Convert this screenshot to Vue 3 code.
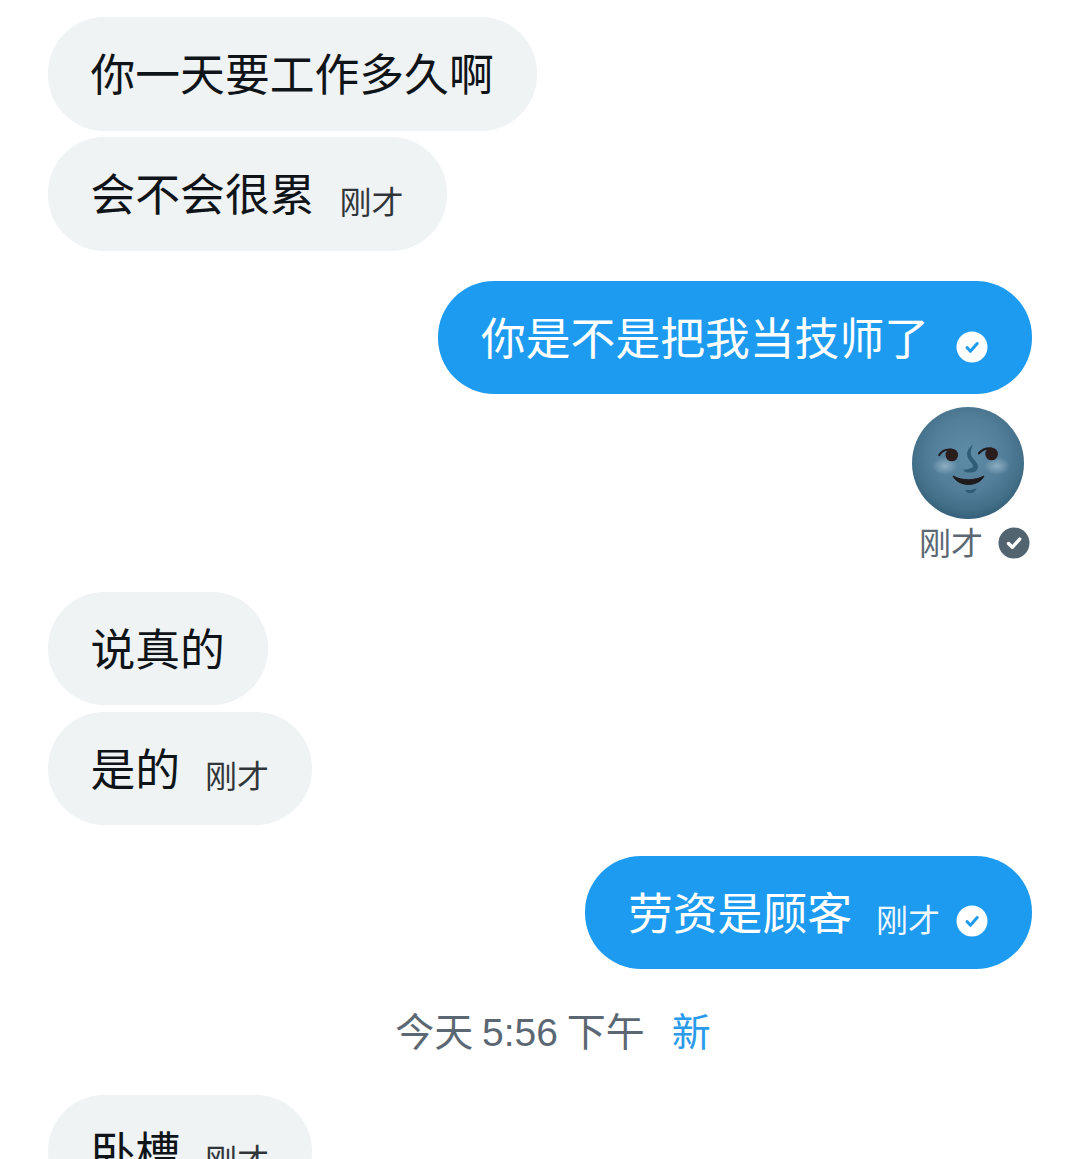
<template>
  <div class="chat">
    <div class="group">
      <div class="bubble in">你一天要工作多久啊</div>
      <div class="bubble in">会不会很累<span class="time">刚才</span></div>
    </div>

    <div class="group out-group first-out">
      <div class="bubble out">
        你是不是把我当技师了
        <svg class="tick tick-solo" viewBox="0 0 32 32">
          <circle cx="16" cy="16" r="15.5" fill="#fff" />
          <path d="M11 16.5l3.4 3.8 6.8-7.8" fill="none" stroke="#1d9bf0" stroke-width="3" stroke-linecap="round" stroke-linejoin="round" />
        </svg>
      </div>
      <svg class="moon" viewBox="0 0 112 112">
        <defs>
          <radialGradient id="moonFill" cx="50%" cy="42%" r="58%">
            <stop offset="0%" stop-color="#5d8ba6" />
            <stop offset="55%" stop-color="#547f9a" />
            <stop offset="85%" stop-color="#436f89" />
            <stop offset="100%" stop-color="#35607a" />
          </radialGradient>
          <radialGradient id="cheek">
            <stop offset="0%" stop-color="#a4c1d1" stop-opacity="0.7" />
            <stop offset="100%" stop-color="#a4c1d1" stop-opacity="0" />
          </radialGradient>
        </defs>
        <circle cx="56" cy="56" r="56" fill="url(#moonFill)" />
        <ellipse cx="33" cy="59" rx="13" ry="9" fill="url(#cheek)" />
        <ellipse cx="85" cy="59" rx="13" ry="9" fill="url(#cheek)" />
        <path d="M27.3 48c2.5-4.2 6.5-6 12-5.4" fill="none" stroke="#1f1a1c" stroke-width="2.2" stroke-linecap="round" />
        <circle cx="39.8" cy="48" r="6.3" fill="#2a1d1c" />
        <path d="M67 46.3c3-3.6 7-5.2 12.5-4.8" fill="none" stroke="#1f1a1c" stroke-width="2.2" stroke-linecap="round" />
        <circle cx="79.6" cy="47" r="6.3" fill="#2a1d1c" />
        <path d="M60.7 37.5c-4 3.4-6.5 7.5-5.3 12 .9 3.4 4.5 6 5.6 9 .5 1.6-1.6 3.6-9.9 4.5 1 1.6 3.8 2.6 6.8 2.6 5 0 8.3-2.5 8-6.2-.3-3.6-4.2-6.4-6.2-9.8-1.6-2.9-.7-7.4 1-12.1z" fill="#2f5d78" />
        <path d="M41 69c9.5 5 21 5 31 0-2 5-9 8.5-15.5 8.5S43 74 41 69z" fill="#1f1a1c" stroke="#1f1a1c" stroke-width="1" stroke-linejoin="round" />
        <path d="M53 83c4 .4 8-.2 11.7-1.8-1 3-3.7 5.1-6.7 5.1-2.2 0-4-1.3-5-3.3z" fill="#2f5d78" />
      </svg>
      <div class="meta">
        <span class="meta-time">刚才</span>
        <svg class="tick" viewBox="0 0 32 32">
          <circle cx="16" cy="16" r="15.5" fill="#536471" />
          <path d="M10.5 16.5l3.8 3.8 7.4-8.2" fill="none" stroke="#fff" stroke-width="3.4" stroke-linecap="round" stroke-linejoin="round" />
        </svg>
      </div>
    </div>

    <div class="group second-in">
      <div class="bubble in">说真的</div>
      <div class="bubble in">是的<span class="time">刚才</span></div>
    </div>

    <div class="group out-group second-out">
      <div class="bubble out">
        劳资是顾客<span class="time">刚才</span>
        <svg class="tick tick-inline" viewBox="0 0 32 32">
          <circle cx="16" cy="16" r="15.5" fill="#fff" />
          <path d="M11 16.5l3.4 3.8 6.8-7.8" fill="none" stroke="#1d9bf0" stroke-width="3" stroke-linecap="round" stroke-linejoin="round" />
        </svg>
      </div>
    </div>

    <div class="divider">今天 5:56 下午<span class="new">新</span></div>

    <div class="group last-in">
      <div class="bubble in">卧槽<span class="time">刚才</span></div>
    </div>
  </div>
</template>

<script setup>
</script>

<style>
html,
body {
  margin: 0;
  background: #fff;
  overflow: hidden;
}
</style>

<style scoped>
.chat {
  height: 1159px;
  overflow: hidden;
  box-sizing: border-box;
  padding: 17px 47px 0 48px;
  font-family: "Liberation Sans", "Noto Sans CJK SC", sans-serif;
}

.group {
  display: flex;
  flex-direction: column;
  align-items: flex-start;
  gap: 6.5px;
}

.out-group {
  align-items: flex-end;
}

.first-out {
  margin-top: 30px;
  gap: 0;
}

.second-in {
  margin-top: 25px;
}

.second-out {
  margin-top: 30.5px;
}

.last-in {
  margin-top: 37px;
}

.bubble {
  display: flex;
  align-items: center;
  height: 113.5px;
  box-sizing: border-box;
  padding: 0 43px 4px 42.5px;
  border-radius: 56px;
  font-size: 44.8px;
  white-space: nowrap;
}

.in {
  background: #eff3f4;
  color: #0f1419;
}

.out {
  background: #1d9bf0;
  color: #fff;
  padding-left: 43px;
  padding-right: 44px;
}

.time {
  font-size: 32px;
  margin-left: 24px;
  position: relative;
  top: 8px;
  opacity: 0.85;
}

.in .time {
  margin-left: 25px;
}

.out .time {
  opacity: 0.92;
}

.tick {
  width: 32px;
  height: 32px;
  flex: none;
}

.tick-solo {
  margin-left: 27px;
  position: relative;
  top: 12px;
}

.tick-inline {
  margin-left: 16px;
  position: relative;
  top: 11px;
}

.moon {
  width: 112px;
  height: 112px;
  margin-top: 12.5px;
  margin-right: 8px;
}

.meta {
  display: flex;
  align-items: center;
  gap: 15px;
  height: 48px;
  margin-right: 2px;
  font-size: 32px;
  color: #5b6873;
}

.meta-time {
  padding-bottom: 4px;
}

.divider {
  margin-top: 39px;
  height: 50px;
  line-height: 50px;
  padding-left: 26px;
  text-align: center;
  font-size: 39px;
  word-spacing: -2px;
  color: #5b6873;
}

.new {
  color: #2a9bea;
  margin-left: 27px;
}
</style>
